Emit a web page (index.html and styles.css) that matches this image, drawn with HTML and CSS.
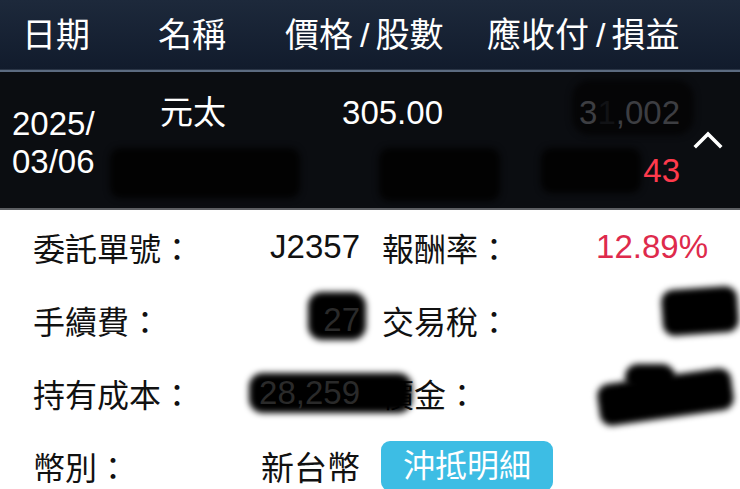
FILE: index.html
```html
<!DOCTYPE html>
<html lang="zh-Hant">
<head>
<meta charset="utf-8">
<title>交易明細</title>
<link rel="stylesheet" href="styles.css">
</head>
<body>
<div class="page">
  <div class="thead">
    <span>日期</span>
    <span>名稱</span>
    <span>價格<span class="sl">/</span>股數</span>
    <span>應收付<span class="sl">/</span>損益</span>
  </div>
  <div class="mainrow">
    <div class="cell date"><span>2025/</span><span>03/06</span></div>
    <div class="cell name"><span>元太</span><span class="blank">&nbsp;</span></div>
    <div class="cell num"><span>305.00</span><span class="blank">&nbsp;</span></div>
    <div class="cell num"><span class="dim">3<span class="hid">1</span>,002</span><span class="loss">43</span></div>
    <div class="cell chev">
      <svg width="30" height="18" viewBox="0 0 30 18"><polyline points="3,15 15,3 27,15" fill="none" stroke="#fff" stroke-width="3.6" stroke-linecap="square"/></svg>
    </div>
  </div>
  <div class="detail">
    <span class="lbl">委託單號：</span><span class="val">J2357</span>
    <span class="lbl r">報酬率：</span><span class="val red">12.89%</span>
    <span class="lbl">手續費：</span><span class="val over">27</span>
    <span class="lbl r">交易稅：</span><span class="val"></span>
    <span class="lbl">持有成本：</span><span class="val over">28,259</span>
    <span class="lbl r">價金：</span><span class="val"></span>
    <span class="lbl">幣別：</span><span class="val">新台幣</span>
    <span class="btncell"><span class="btn">沖抵明細</span></span>
  </div>

  <div class="smudge s1"></div>
  <div class="smudge s2"></div>
  <div class="smudge s3"></div>
  <div class="smudge s4"></div>
  <div class="smudge s5"></div>
  <div class="smudge s6"></div>
  <div class="smudge s7"></div>
  <div class="smudge s8"></div>
  <div class="smudge s8b"></div>
</div>
</body>
</html>
```
FILE: styles.css
```css
html, body {
  margin: 0;
  padding: 0;
  background: #fff;
}
body {
  font-family: "Liberation Sans", "Noto Sans CJK TC", sans-serif;
  overflow: hidden;
}
.page {
  position: relative;
  width: 740px;
  height: 489px;
  overflow: hidden;
}
.thead {
  height: 70px;
  display: grid;
  grid-template-columns: 136px 127px 202px auto;
  align-items: center;
  padding-left: 22px;
  background: linear-gradient(#1d293b, #111b2c);
  color: #fff;
  font-size: 34px;
  border-bottom: 2px solid #5c6b80;
  box-shadow: inset 0 -1px 0 #2a3546;
}
.thead > span {
  line-height: 70px;
  white-space: nowrap;
}
.sl {
  margin: 0 6px 0 7px;
}
.mainrow {
  height: 136px;
  display: grid;
  grid-template-columns: 148px 130px 153px 237px 72px;
  padding-left: 12px;
  background: #0b0d11;
  color: #fff;
  font-size: 33px;
  border-bottom: 2px solid #5d5f63;
}
.cell {
  display: flex;
  flex-direction: column;
  padding-top: 12px;
  line-height: 58px;
}
.cell.date {
  padding-top: 33px;
  line-height: 38px;
}
.cell.num {
  align-items: flex-end;
}
.cell.chev {
  align-items: center;
  justify-content: center;
  padding: 0;
  margin-left: -16px;
}
.cell.chev svg {
  display: block;
}
.dim {
  color: #3d3e42;
  position: relative;
  z-index: 2;
}
.hid {
  color: #111215;
}
.loss {
  color: #ff3a4c;
  position: relative;
  z-index: 2;
}
.detail {
  display: grid;
  grid-template-columns: 160px 167px 182px 166px;
  grid-auto-rows: 73px;
  align-items: center;
  padding-left: 33px;
  color: #111;
  font-size: 32px;
}
.lbl {
  white-space: nowrap;
}
.lbl.r {
  padding-left: 22px;
}
.val {
  text-align: right;
  white-space: nowrap;
  font-size: 33px;
}
.val.red {
  color: #de2a4c;
}
.val.over {
  position: relative;
  z-index: 2;
  color: #2a2a2a;
}
.btncell {
  grid-column: 3 / 5;
  padding-left: 21px;
}
.btn {
  display: inline-block;
  width: 172px;
  height: 50px;
  line-height: 50px;
  text-align: center;
  border-radius: 9px;
  background: #3dbde4;
  color: #fff;
  font-size: 32px;
}
.smudge {
  position: absolute;
  background: #000;
  filter: blur(3px);
  border-radius: 10px;
  z-index: 1;
}
.s1 { left: 110px; top: 148px; width: 190px; height: 50px; background: #020202; }
.s2 { left: 379px; top: 148px; width: 121px; height: 53px; background: #020202; }
.s3 { left: 541px; top: 148px; width: 100px; height: 45px; background: #020202; }
.s4 { left: 572px; top: 80px; width: 122px; height: 55px; background: #050506; border-radius: 18px; }
.s5 { left: 308px; top: 292px; width: 58px; height: 48px; border-radius: 14px; }
.s6 { left: 662px; top: 288px; width: 76px; height: 46px; border-radius: 12px; transform: rotate(-4deg); }
.s7 { left: 249px; top: 373px; width: 163px; height: 40px; border-radius: 14px; }
.s8 { left: 598px; top: 376px; width: 135px; height: 42px; border-radius: 12px; transform: rotate(-8deg); }
.s8b { left: 625px; top: 364px; width: 50px; height: 26px; border-radius: 14px; }
```
